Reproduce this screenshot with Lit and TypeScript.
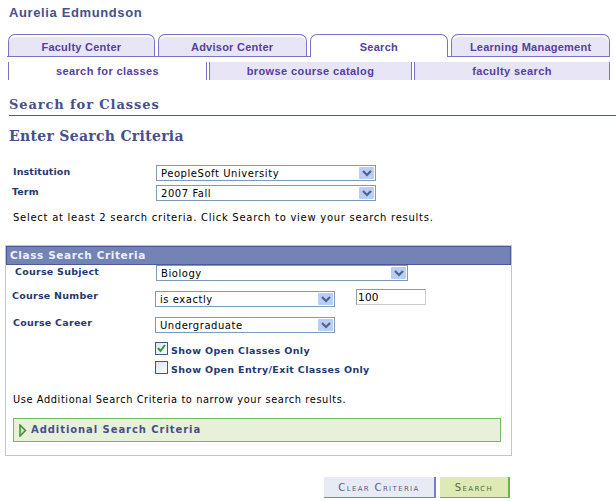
import { LitElement, html, css } from "lit";
import { customElement } from "lit/decorators.js";

const arrow = html`<span class="arr"><svg width="10" height="7" viewBox="0 0 10 7"><path d="M1 1 L5 5 L9 1" fill="none" stroke="#4f6488" stroke-width="2.2"/></svg></span>`;

@customElement("app-root")
export class AppRoot extends LitElement {
  static styles = css`
    :host { display: block; width: 616px; height: 501px; background: #fff; overflow: hidden; position: relative;
      font-family: "DejaVu Sans", Verdana, sans-serif; font-size: 10px; color: #000; }
    .name { height: 34px; box-sizing: border-box; padding: 5px 0 0 9px; font: bold 13px/15px "Liberation Sans", Arial, sans-serif; color: #46508a; letter-spacing: .62px; }
    .tabs { display: flex; gap: 3px; height: 23px; margin-left: 7px; width: 603px; box-sizing: border-box; border-bottom: 1px solid #7a72c8; padding-left: 1px; }
    .tab { box-sizing: border-box; height: 22px; border: 1px solid #7a72c8; border-bottom: 0; border-radius: 7px 7px 0 0; background: #e8e6f6; color: #54409e;
      font: bold 11px/24px "Liberation Sans", Arial, sans-serif; letter-spacing: .25px; text-align: center; box-shadow: inset 0 2px 0 #fff; }
    .tab.on { background: #fff; height: 23px; margin-bottom: -1px; }
    .subs { display: flex; height: 18px; margin: 5px 0 0 8px; width: 602px; }
    .sub { box-sizing: border-box; height: 18px; background: #e8e6f6; color: #54409e; border-right: 1px solid #7a72c8; text-align: center;
      font: bold 11px/18px "Liberation Sans", Arial, sans-serif; letter-spacing: .4px; }
    .sub + .sub { border-left: 1px solid #7a72c8; margin-left: 2px; }
    .sub.on { background: #fff; border-left: 1px solid #7a72c8; }
    .ptitle { height: 36px; box-sizing: border-box; margin-left: 10px; padding-top: 16px; border-bottom: 1px solid #4f5a96;
      font: bold 13px/17px "DejaVu Serif", Georgia, serif; color: #46508a; letter-spacing: .9px; margin-left: 9px; }
    .etitle { height: 49px; box-sizing: border-box; padding: 11px 0 0 9px; font: bold 14px/18px "DejaVu Serif", Georgia, serif; color: #46508a; letter-spacing: .3px; }
    .lbl { font: bold 9.5px/12px "DejaVu Sans", Verdana, sans-serif; color: #1f3a70; letter-spacing: .1px; padding-top: 1px; }
    .row { display: flex; align-items: flex-start; }
    .sel { box-sizing: border-box; height: 16px; border: 1px solid #7d9ab8; background: #fff; display: flex; align-items: center; justify-content: space-between;
      padding: 0 1px 0 4px; line-height: 14px; letter-spacing: .55px; }
    .txt { padding-top: 2px; }
    .arr { width: 15px; height: 12px; background: #b9cdf6; display: flex; align-items: center; justify-content: center; border-radius: 1px; }
    .top1 { padding-left: 13px; }
    .top1 .lbl { width: 143px; }
    .top2 { margin-top: 4px; padding-left: 12px; }
    .top2 .lbl { width: 144px; }
    .hint { margin: 10px 0 0 13px; line-height: 14px; letter-spacing: .73px; }
    .box { box-sizing: border-box; margin: 20px 0 0 5px; width: 507px; height: 211px; border: 1px solid #bcc6da; }
    .bh { box-sizing: border-box; height: 19px; background: #7383b5; border: 1px solid #4a5a96; color: #eef0f8; font: bold 10.5px/17px "DejaVu Sans", Verdana, sans-serif; padding-left: 3px; letter-spacing: .6px; }
    .cs { padding-left: 9px; }
    .cs .lbl { width: 141px; letter-spacing: .25px; }
    .cn { margin-top: 10px; padding-left: 6px; }
    .cn .lbl { width: 143px; letter-spacing: .25px; margin-top: -2px; }
    .inp { box-sizing: border-box; width: 70px; height: 16px; margin: -2px 0 0 21px; border: 1px solid; border-color: #999 #ccc #ccc #999; padding-left: 1px; line-height: 14px; font-size: 10.5px; letter-spacing: .2px; }
    .cc { margin-top: 10px; padding-left: 7px; }
    .cc .lbl { width: 142px; letter-spacing: .25px; margin-top: -1px; }
    .chk { display: flex; align-items: flex-start; margin-left: 149px; height: 13px; gap: 3px; }
    .chk .lbl { letter-spacing: .35px; padding-top: 3px; }
    .cb { box-sizing: border-box; width: 13px; height: 13px; border: 1px solid #3f5a80; background: linear-gradient(135deg, #dfe1ee, #fff); display: flex; }
    .use { margin: 19px 0 0 7px; line-height: 14px; letter-spacing: .6px; font-size: 9.8px; }
    .add { box-sizing: border-box; margin: 11px 0 0 7px; width: 488px; height: 24px; border: 1px solid #6bbd5e; background: #e8f0d9; display: flex; align-items: center; gap: 4px; padding-left: 5px;
      font: bold 10px/14px "DejaVu Sans", Verdana, sans-serif; color: #46508a; letter-spacing: .93px; }
    .btns { display: flex; margin: 21px 0 0 324px; gap: 4px; }
    .btn { box-sizing: border-box; height: 21px; line-height: 21px; text-align: center; font-size: 10px; letter-spacing: 1.35px; font-variant: small-caps; }
    .clear { width: 112px; background: #e8ebf5; color: #55617f; border-right: 2px solid #7383b5; border-bottom: 1px solid #7383b5; }
    .srch { width: 70px; background: #dfe9b5; color: #4f6a4a; border-right: 2px solid #6bb04f; border-bottom: 1px solid #6bb04f; }
  `;

  render() {
    return html`
      <div class="name">Aurelia Edmundson</div>
      <div class="tabs">
        <div class="tab" style="width:147px">Faculty Center</div>
        <div class="tab" style="width:149px">Advisor Center</div>
        <div class="tab on" style="width:139px">Search</div>
        <div class="tab" style="width:159px">Learning Management</div>
      </div>
      <div class="subs">
        <div class="sub on" style="width:199px">search for classes</div>
        <div class="sub" style="width:203px">browse course catalog</div>
        <div class="sub" style="width:196px">faculty search</div>
      </div>
      <div class="ptitle">Search for Classes</div>
      <div class="etitle">Enter Search Criteria</div>
      <div class="row top1"><div class="lbl">Institution</div><div class="sel" style="width:220px"><span class="txt">PeopleSoft University</span>${arrow}</div></div>
      <div class="row top2"><div class="lbl">Term</div><div class="sel" style="width:220px"><span class="txt">2007 Fall</span>${arrow}</div></div>
      <div class="hint">Select at least 2 search criteria. Click Search to view your search results.</div>
      <div class="box">
        <div class="bh">Class Search Criteria</div>
        <div class="row cs"><div class="lbl">Course Subject</div><div class="sel" style="width:252px"><span class="txt">Biology</span>${arrow}</div></div>
        <div class="row cn"><div class="lbl">Course Number</div><div class="sel" style="width:180px"><span class="txt">is exactly</span>${arrow}</div><div class="inp">100</div></div>
        <div class="row cc"><div class="lbl">Course Career</div><div class="sel" style="width:180px"><span class="txt">Undergraduate</span>${arrow}</div></div>
        <div class="chk" style="margin-top:9px"><span class="cb"><svg width="11" height="11" viewBox="0 0 11 11"><path d="M2 5 L4.5 8 L9 2" fill="none" stroke="#2f9a3a" stroke-width="2"/></svg></span><span class="lbl">Show Open Classes Only</span></div>
        <div class="chk" style="margin-top:6px"><span class="cb"></span><span class="lbl">Show Open Entry/Exit Classes Only</span></div>
        <div class="use">Use Additional Search Criteria to narrow your search results.</div>
        <div class="add"><svg width="8" height="13" viewBox="0 0 8 13"><path d="M1 1 L6.5 6.5 L1 12 Z" fill="#cfe6b8" stroke="#3f8f3a" stroke-width="1.5"/></svg><span>Additional Search Criteria</span></div>
      </div>
      <div class="btns"><div class="btn clear">Clear Criteria</div><div class="btn srch">Search</div></div>
    `;
  }
}
